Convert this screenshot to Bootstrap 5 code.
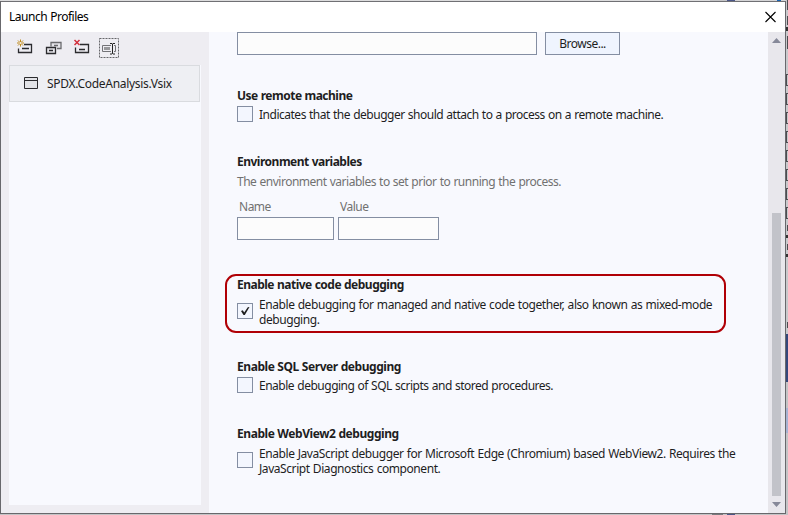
<!DOCTYPE html>
<html lang="en">
<head>
<meta charset="utf-8">
<meta name="viewport" content="width=device-width, initial-scale=1">
<title>Launch Profiles</title>
<link href="https://cdn.jsdelivr.net/npm/bootstrap@5.3.0/dist/css/bootstrap.min.css" rel="stylesheet">
<style>
html,body{height:515px;overflow:hidden}
body{margin:0;width:788px;background:#c4c4c6;font:12px/16px "Noto Sans","Open Sans",sans-serif;color:#1e1e1e}
.desk{left:0;top:0;width:788px;height:515px}
.dialog-win{width:786px;height:514px;padding:1px 0 0;border:1px solid #68686c;border-top:0;background:#f8f9fe;background-clip:padding-box}
.dialog-win::before{content:"";position:absolute;left:-1px;top:0;right:-1px;height:1px;background:linear-gradient(90deg,#dcdcdd 710px,#c4c4c6 710px,#c4c4c6 727px,#4b5688 727px,#4b5688 735px,#d4d4d6 735px,#d4d4d6 777px,#1763b4 777px,#1763b4 781px,#d4d4d6 781px)}
.titlebar{height:31px;background:#fff;padding:0 8px 0 8px;border-top:1px solid #707074;color:#000}
.side{width:208px;background:#eeedf2;padding:0 8px 8px}
.tools{height:33px;padding:6px 0 0 6px}
.tool{width:20px;height:20px;margin-right:8px}
.profiles{background:#f8f9fe}
.profile{height:37px;width:191px;background:#eeeff3;border:1px solid #d9dbdf;padding-left:14px}
.profile svg{margin:0 9px 1px 0}
.main-pane{padding-left:28px;overflow:hidden}
.box{background:#fcfcfc;border:1px solid #848ea2;height:23px}
.browse{height:23px;width:75px;border:1px solid #848ea2;border-radius:0;background:#eff4fe;color:#1e1e1e;padding:0;font-size:12px;line-height:20px}
.sec h6{font-size:12px;line-height:16px;height:16px;padding-top:1px;font-weight:700;margin:0}
.check{width:16px;height:16px;border:1px solid #848ea2;background:#f3f6fe;flex:none;margin-right:6px}
.one{margin-top:3px;height:16px}
.one .t{margin-top:2px}
.two{line-height:15px;margin-top:4px}
.two .lines{margin:1px 0 -1px}
.s-remote{height:66px;margin-top:32px}.s-env{height:123px}.s-native{height:82px}.s-sql{height:67px}
.s-env h6{color:#1e1e1e}
.env-note{margin-top:4px;height:25px;padding-top:1px}
.env-cols{height:19px;padding-top:1px}
.env-cols span:first-child{min-width:0}
.muted{color:#717171}
.ring{left:-12px;top:-2px;width:501px;height:59px;border:2px solid #b00006;border-radius:11px}
.scroll{width:17px;background:#e8e7ec}
.thumb{width:9px;height:283px;background:#c2c3c9;margin:181px 0 0 4px}
.t{white-space:nowrap;display:inline-block;letter-spacing:-.49px;word-spacing:.5px}
h6 .t{letter-spacing:-.5px;word-spacing:.3px}
.ls-35{letter-spacing:-.43px}
.ls-30{letter-spacing:-.3px}
h6 .ls-40{letter-spacing:-.44px}
</style>
<script src="https://cdn.jsdelivr.net/npm/bootstrap@5.3.0/dist/js/bootstrap.bundle.min.js"></script>
</head>
<body class="position-relative">
<svg class="desk position-absolute" viewBox="0 0 788 515" shape-rendering="crispEdges">
<path fill="#7a7a7e" d="M712 514h11v1h-11z"/><path fill="#4b5688" d="M727 514h8v1h-8z"/>
<path fill="#c9c9cc" d="M786 0h2v334h-2z"/><path fill="#34477b" d="M786 334h2v48h-2z"/><path fill="#a8b3d3" d="M786 408h2v25h-2z"/>
<path fill="none" stroke="#4c4c50" d="M788 74.500h-1.500v11H788M788 93.500h-1.500v11H788M788 112.500h-1.500v11H788M788 131.500h-1.500v11H788M788 150.500h-1.500v11H788M788 169.500h-1.500v11H788M788 188.500h-1.500v11H788M788 207.500h-1.500v11H788M787.500 0v10M787.500 16v9M787.500 36v13M787.500 225v6M787.500 244v6M787.500 322v6"/>
<path fill="#333" d="M786 27h2v4h-2zM786 235h2v3h-2zM786 254h2v3h-2z"/>
</svg>
<div class="dialog-win position-relative d-flex flex-column">
<header class="titlebar d-flex align-items-center justify-content-between"><span class="t">Launch Profiles</span>
<svg width="13" height="13" viewBox="0 0 13 13"><path d="M1.500 1l10 10M11.500 1l-10 10" stroke="#000" stroke-width="1.100" fill="none"/></svg></header>
<div class="d-flex flex-grow-1 overflow-hidden">
<aside class="side d-flex flex-column">
<div class="tools d-flex">
<svg class="tool" viewBox="0 0 20 20"><g fill="none"><path d="M9 6.500h7.500v8h-13v-4M7 10.500h7" stroke="#2b2b2e" stroke-width="1.300"/><path d="M5.500 1.500v7M2 5h7M3 2.500l5 5M8 2.500l-5 5" stroke="#c08a1c"/><circle cx="5.500" cy="5" r="1.100" fill="#f5eedd"/></g></svg>
<svg class="tool" viewBox="0 0 20 20"><g fill="#e6e5ea"><path d="M8 8.500v-4h10v6h-4M11 7.500h4" stroke="#6a6a6d" stroke-width="1.300"/><path d="M3.500 9.500h9v6h-9zM6 12.500h4" stroke="#2b2b2e" stroke-width="1.300"/></g></svg>
<svg class="tool" viewBox="0 0 20 20"><g fill="none"><path d="M9 6.500h8.500v8h-13v-5M8 11.500h6" stroke="#2b2b2e" stroke-width="1.300"/><path d="M3.500 2l5 5M8.500 2l-5 5" stroke="#d22f3c" stroke-width="1.500"/></g></svg>
<svg class="tool" viewBox="0 0 20 20"><g fill="none"><path d="M.5.500h19v19H.5z" stroke="#66666a" stroke-dasharray="2 1"/><path d="M12 7.500H3.500v6H12M15 7.500h1.500v6H15" stroke="#737377"/><path d="M5 9h6v3H5z" fill="#98989b"/><path d="M11 5.500h2l.5.500.5-.5h2M13.500 6v9.500M11 16h2l.5-.5.5.5h2" stroke="#222"/></g></svg>
</div>
<div class="profiles flex-grow-1"><div class="profile d-flex align-items-center">
<svg width="14" height="12" viewBox="0 0 14 12"><path d="M.5.500h13v11H.5zM0 3.500h14" fill="#e2e3e7" stroke="#2b2b2e"/></svg><span class="t ls-30">SPDX.CodeAnalysis.Vsix</span></div></div>
</aside>
<main class="main-pane flex-grow-1">
<div class="d-flex gap-2"><div class="box" style="width:300px"></div><button class="btn browse"><span class="t">Browse...</span></button></div>
<section class="sec s-remote"><h6><span class="t">Use remote machine</span></h6>
<div class="d-flex align-items-center one"><span class="check"></span><span class="t">Indicates that the debugger should attach to a process on a remote machine.</span></div></section>
<section class="sec s-env muted"><h6><span class="t">Environment variables</span></h6>
<div class="env-note"><span class="t">The environment variables to set prior to running the process.</span></div>
<div class="d-flex env-cols"><span style="width:101px;padding-left:2px"><span class="t">Name</span></span><span style="padding-left:2px"><span class="t">Value</span></span></div>
<div class="d-flex gap-1"><div class="box" style="width:97px"></div><div class="box" style="width:101px"></div></div></section>
<section class="sec s-native position-relative"><h6><span class="t">Enable native code debugging</span></h6>
<div class="d-flex align-items-center two"><span class="check"><svg class="d-block" width="14" height="14" viewBox="0 0 14 14"><path d="M3 7l1.800-.7L6.200 8.500 9.800 3.200l1.700-.2L6.800 11H5.500z" fill="#1e1e1e"/></svg></span><span class="lines"><span class="t ls-35">Enable debugging for managed and native code together, also known as mixed-mode</span><br><span class="t ls-35">debugging.</span></span></div><div class="ring position-absolute"></div></section>
<section class="sec s-sql"><h6><span class="t ls-40">Enable SQL Server debugging</span></h6>
<div class="d-flex align-items-center one"><span class="check"></span><span class="t">Enable debugging of SQL scripts and stored procedures.</span></div></section>
<section class="sec"><h6><span class="t ls-40">Enable WebView2 debugging</span></h6>
<div class="d-flex align-items-center two"><span class="check"></span><span class="lines"><span class="t ls-35">Enable JavaScript debugger for Microsoft Edge (Chromium) based WebView2. Requires the</span><br><span class="t ls-35">JavaScript Diagnostics component.</span></span></div></section>
</main>
<div class="scroll position-relative"><div class="thumb float-start"></div>
<svg class="position-absolute top-0 start-0" width="17" height="481"><path d="M4 11h9L8.500 6zM4 470h9l-4.500 5z" fill="#868999"/></svg></div>
</div></div>
</body>
</html>
